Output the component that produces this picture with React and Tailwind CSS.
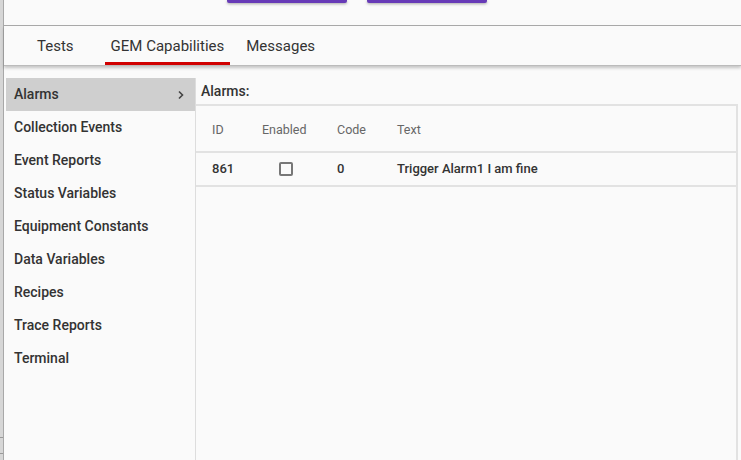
import React from "react";

const items = [
  "Alarms",
  "Collection Events",
  "Event Reports",
  "Status Variables",
  "Equipment Constants",
  "Data Variables",
  "Recipes",
  "Trace Reports",
  "Terminal",
];

export default function App() {
  return (
    <div
      className="flex h-[460px] w-[741px] overflow-hidden bg-[#fafafa] text-[#333]"
      style={{ fontFamily: "Roboto, 'Liberation Sans', sans-serif" }}
    >
      {/* left strip */}
      <div className="flex h-full w-[4px] flex-col border-r border-[#a8a8a8] bg-[#d6d6d6]">
        <div className="mt-[437px] h-px bg-[#999]" />
        <div className="mt-[15px] h-px bg-[#999]" />
      </div>

      <div className="flex min-w-0 flex-1 flex-col">
        {/* top buttons */}
        <div className="flex h-[26px] shrink-0 items-start gap-[20px] border-b border-[#aaa] pl-[223px]">
          <div className="h-[3px] w-[120px] rounded-b-[2px] bg-[#673ab7] shadow-[0_1px_3px_rgba(0,0,0,0.35)]" />
          <div className="h-[3px] w-[120px] rounded-b-[2px] bg-[#673ab7] shadow-[0_1px_3px_rgba(0,0,0,0.35)]" />
        </div>

        {/* tabs */}
        <div className="relative z-10 flex h-[40px] shrink-0 items-stretch border-b border-[#bbb] text-[15px] shadow-[0_2px_3px_rgba(0,0,0,0.22)]">
          <div className="flex items-center pl-[33px] pr-[31px] pt-[2px] text-[#333]">Tests</div>
          <div className="flex items-center border-b-[3px] border-[#d00000] px-[6px] pt-[5px] text-[#333]">
            GEM Capabilities
          </div>
          <div className="flex items-center pl-[16px] pt-[2px] text-[#333]">Messages</div>
        </div>

        {/* content */}
        <div className="flex flex-1 pt-[12px] pl-[2px]">
          <div className="flex w-[190px] shrink-0 flex-col border-r border-[#ddd]">
            {items.map((it, i) => (
              <div
                key={it}
                className={
                  "flex h-[33px] items-center justify-between pl-[8px] pr-[10px] text-[14px] font-medium " +
                  (i === 0 ? "bg-[#cfcfcf]" : "")
                }
              >
                <span>{it}</span>
                {i === 0 && (
                  <svg width="8" height="10" viewBox="0 0 8 10" className="text-[#444]">
                    <path d="M2 1.5 L5.5 5 L2 8.5" fill="none" stroke="currentColor" strokeWidth="1.6" />
                  </svg>
                )}
              </div>
            ))}
          </div>

          <div className="flex min-w-0 flex-1 flex-col">
            <div className="flex h-[26px] items-center pl-[5px] text-[14px] font-medium">Alarms:</div>
            <div className="mr-[3px] flex-1 border-r-2 border-t-2 border-[#e2e2e2]">
              <div className="flex h-[47px] items-center border-b-2 border-[#e2e2e2] pt-[3px] text-[12.5px] text-[#666]">
                <div className="w-[66px] pl-[16px]">ID</div>
                <div className="w-[75px]">Enabled</div>
                <div className="w-[60px]">Code</div>
                <div>Text</div>
              </div>
              <div className="flex h-[34px] items-center border-b-2 border-[#e2e2e2] text-[13px] font-medium">
                <div className="w-[66px] pl-[16px]">861</div>
                <div className="flex w-[75px] pl-[17px]">
                  <div className="h-[14px] w-[14px] rounded-[2px] border-2 border-[#777]" />
                </div>
                <div className="w-[60px]">0</div>
                <div>Trigger Alarm1 I am fine</div>
              </div>
            </div>
          </div>
        </div>
      </div>
    </div>
  );
}
